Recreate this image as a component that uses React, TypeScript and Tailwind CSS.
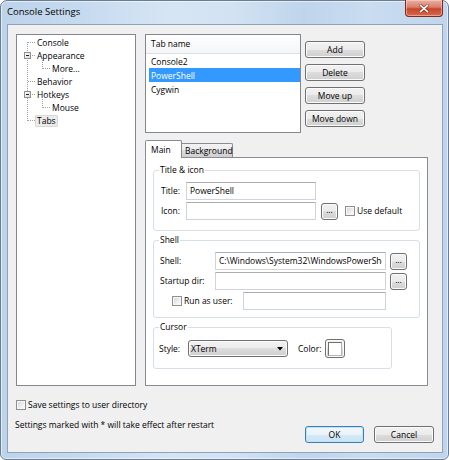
import React from 'react';

const face =
  'rounded-[3px] border border-[#707070] bg-[linear-gradient(180deg,#f2f2f2_0%,#ebebeb_50%,#dddddd_50%,#cfcfcf_100%)] shadow-[inset_0_0_0_1px_#fbfbfb] text-black';
const btn = `flex items-center justify-center ${face}`;

const field =
  'flex h-[18px] items-center border border-[#cfd3da] border-t-[#abadb3] bg-white px-[3px] whitespace-nowrap overflow-hidden';

const CheckBox = () => (
  <span className="block h-[10px] w-[10px] shrink-0 border border-[#8e8f8f] bg-[linear-gradient(135deg,#cfd2d6_0%,#f4f4f4_70%,#ffffff_100%)] shadow-[inset_0_0_0_1px_#f7f7f7]" />
);

const Group = ({ title, className, children }: { title: string; className: string; children: React.ReactNode }) => (
  <fieldset className={`rounded-[3px] border border-[#d5dfe5] ${className}`}>
    <legend className="ml-[5px] px-[1px] leading-[12px]">{title}</legend>
    {children}
  </fieldset>
);

const TreeLines = () => (
  <svg className="pointer-events-none absolute left-0 top-0" width="60" height="100">
    <defs>
      <linearGradient id="bx" x1="0" y1="0" x2="1" y2="1">
        <stop offset="0" stopColor="#ffffff" />
        <stop offset="1" stopColor="#d8d8d8" />
      </linearGradient>
    </defs>
    <g stroke="#a0a0a0" strokeDasharray="1 1" fill="none">
      <line x1="10.5" y1="7" x2="10.5" y2="86" />
      {[7.5, 20.5, 46.5, 59.5, 85.5].map((y) => (
        <line key={y} x1="11" y1={y} x2="18" y2={y} />
      ))}
      <line x1="25.5" y1="25" x2="25.5" y2="34" />
      <line x1="26" y1="33.5" x2="33" y2="33.5" />
      <line x1="25.5" y1="64" x2="25.5" y2="73" />
      <line x1="26" y1="72.5" x2="33" y2="72.5" />
    </g>
    {[20.5, 59.5].map((y) => (
      <g key={y}>
        <rect x="7.5" y={y - 3} width="6" height="6" fill="url(#bx)" stroke="#919191" />
        <line x1="9" y1={y} x2="12" y2={y} stroke="#1f1f1f" />
      </g>
    ))}
  </svg>
);

const treeItems: { label: string; child?: boolean; selected?: boolean }[] = [
  { label: 'Console' },
  { label: 'Appearance' },
  { label: 'More...', child: true },
  { label: 'Behavior' },
  { label: 'Hotkeys' },
  { label: 'Mouse', child: true },
  { label: 'Tabs', selected: true },
];

export default function App() {
  return (
    <div className="h-[460px] w-[449px] font-['Open_Sans','Noto_Sans',sans-serif] text-[8.5px] leading-[12px] text-black">
      <div className="flex h-full flex-col rounded-[6px] rounded-t-[7px] border border-[#6a7d93] bg-[linear-gradient(90deg,#bdd3ea_0%,#c6daef_18%,#d6e5f4_38%,#d2e2f2_52%,#bfd5ec_68%,#c9dcf0_82%,#c0d5ec_100%)] shadow-[inset_0_0_0_1px_rgba(255,255,255,0.55)]">
        {/* Title bar */}
        <div className="flex h-[23px] shrink-0 items-start justify-between">
          <span className="pl-[6px] pt-[5px] text-[9.5px] leading-[12px]">Console Settings</span>
          <div className="-mt-px mr-[5px] flex h-[17px] w-[38px] items-center justify-center rounded-b-[4px] border border-t-0 border-[#7e2a1c] bg-[linear-gradient(180deg,#eab0a3_0%,#db7d68_45%,#c8452c_55%,#d8694a_100%)] shadow-[inset_0_0_0_1px_rgba(255,220,210,0.5)]">
            <svg width="10" height="9" viewBox="0 0 10 9">
              <g strokeLinecap="square">
                <line x1="1.5" y1="1.5" x2="8.5" y2="7.5" stroke="#5a1d12" strokeWidth="3" strokeOpacity="0.6" />
                <line x1="8.5" y1="1.5" x2="1.5" y2="7.5" stroke="#5a1d12" strokeWidth="3" strokeOpacity="0.6" />
                <line x1="1.5" y1="1.5" x2="8.5" y2="7.5" stroke="#ffffff" strokeWidth="1.6" />
                <line x1="8.5" y1="1.5" x2="1.5" y2="7.5" stroke="#ffffff" strokeWidth="1.6" />
              </g>
            </svg>
          </div>
        </div>

        {/* Client area */}
        <div className="mb-[6px] ml-[6px] mr-[5px] flex flex-1 flex-col border border-[#8ea3ba] bg-[#f0f0f0] px-[8px] pt-[9px]">
          <div className="flex">
            {/* Tree */}
            <div className="relative h-[352px] w-[120px] shrink-0 border border-[#828790] bg-white pt-[1px]">
              <TreeLines />
              {treeItems.map((it) => (
                <div key={it.label} className="flex h-[13px] items-center">
                  <span
                    className={`${it.child ? 'ml-[33px]' : 'ml-[18px]'} px-[2px] leading-[12px] ${
                      it.selected ? 'rounded-[2px] bg-[#ebebeb] shadow-[inset_0_0_0_1px_#d9d9d9]' : ''
                    }`}
                  >
                    {it.label}
                  </span>
                </div>
              ))}
            </div>

            {/* Right column */}
            <div className="ml-[9px] flex w-[283px] flex-col">
              <div className="flex h-[99px]">
                <div className="h-full w-[156px] border border-[#828790] bg-white">
                  <div className="flex h-[19px] items-center border-b border-[#dedfe2] bg-[linear-gradient(180deg,#ffffff_0%,#f4f5f7_100%)] pl-[5px]">
                    Tab name
                  </div>
                  <div className="h-[14px] pl-[5px] pt-[2px]">Console2</div>
                  <div className="ml-[3px] h-[14px] bg-[#3399ff] pl-[2px] pt-[2px] text-white">PowerShell</div>
                  <div className="h-[14px] pl-[5px] pt-[2px]">Cygwin</div>
                </div>
                <div className="ml-[4px] flex flex-col gap-[6px] pt-[7px]">
                  {['Add', 'Delete', 'Move up', 'Move down'].map((b) => (
                    <div key={b} className={`${btn} h-[17px] w-[60px]`}>
                      {b}
                    </div>
                  ))}
                </div>
              </div>

              {/* Tabs */}
              <div className="mt-[7px] flex h-[17px] items-end">
                <div className="relative z-10 -mb-px flex h-[18px] w-[37px] items-center rounded-t-[2px] border border-b-0 border-[#898c95] bg-white pl-[5px]">
                  Main
                </div>
                <div className="flex h-[14px] w-[51px] items-center rounded-tr-[2px] border-r border-t border-[#898c95] bg-[linear-gradient(180deg,#f3f3f3_0%,#ebebeb_50%,#dddddd_50%,#cfcfcf_100%)] pl-[3px]">
                  Background
                </div>
              </div>

              <div className="flex h-[229px] flex-col border border-[#898c95] bg-white px-[7px] pt-[6px]">
                <Group title="Title & icon" className="w-[267px]">
                  <div className="pb-[10px] pl-[7px] pt-[6px]">
                    <div className="flex h-[18px] items-center">
                      <span className="w-[25px]">Title:</span>
                      <div className={`${field} w-[130px]`}>PowerShell</div>
                    </div>
                    <div className="mt-[2px] flex h-[18px] items-center">
                      <span className="w-[25px]">Icon:</span>
                      <div className={`${field} w-[130px]`} />
                      <div className={`${btn} ml-[5px] h-[17px] w-[17px] pb-[3px]`}>...</div>
                      <span className="ml-[7px]">
                        <CheckBox />
                      </span>
                      <span className="ml-[2px]">Use default</span>
                    </div>
                  </div>
                </Group>

                <Group title="Shell" className="mt-[3px] w-[267px]">
                  <div className="pb-[7px] pl-[6px] pt-[6px]">
                    <div className="flex h-[18px] items-center">
                      <span className="w-[55px]">Shell:</span>
                      <div className={`${field} w-[171px]`}>
                        <span className="block min-w-0 overflow-hidden whitespace-nowrap">
                          C:\Windows\System32\WindowsPowerShell
                        </span>
                      </div>
                      <div className={`${btn} ml-[4px] h-[17px] w-[17px] pb-[3px]`}>...</div>
                    </div>
                    <div className="mt-[2px] flex h-[18px] items-center">
                      <span className="w-[55px]">Startup dir:</span>
                      <div className={`${field} w-[171px]`} />
                      <div className={`${btn} ml-[4px] h-[17px] w-[17px] pb-[3px]`}>...</div>
                    </div>
                    <div className="mt-[2px] flex h-[18px] items-center">
                      <span className="flex w-[83px] items-center pl-[12px]">
                        <CheckBox />
                        <span className="ml-[2px]">Run as user:</span>
                      </span>
                      <div className={`${field} w-[143px]`} />
                    </div>
                  </div>
                </Group>

                <Group title="Cursor" className="mt-[3px] w-[239px]">
                  <div className="mb-[10px] mt-[6px] flex h-[19px] items-center pl-[5px]">
                    <span className="w-[29px]">Style:</span>
                    <div className={`${face} flex h-[17px] w-[100px] items-center justify-between pl-[2px] pr-[4px]`}>
                      <span>XTerm</span>
                      <svg width="6" height="4" viewBox="0 0 6 4">
                        <path d="M0 0H6L3 3.5Z" fill="#000" />
                      </svg>
                    </div>
                    <span className="ml-[10px] w-[27px]">Color:</span>
                    <div className={`${btn} h-[19px] w-[20px]`}>
                      <span className="block h-[14px] w-[14px] border border-[#6f6f6f] border-b-[#b5b5b5] border-r-[#b5b5b5] bg-white" />
                    </div>
                  </div>
                </Group>
              </div>
            </div>
          </div>

          {/* Bottom */}
          <div className="mt-[13px] flex h-[12px] items-center">
            <CheckBox />
            <span className="ml-[2px]">Save settings to user directory</span>
          </div>
          <div className="mt-[8px] flex items-start justify-between">
            <span className="-ml-px">Settings marked with * will take effect after restart</span>
            <div className="mt-[7px] flex gap-[10px]">
              <div className="flex h-[17px] w-[59px] items-center justify-center rounded-[3px] border border-[#3c7fb1] bg-[linear-gradient(180deg,#f2f8fc_0%,#e8f3fa_50%,#d7eaf7_50%,#cae3f4_100%)] shadow-[inset_0_0_0_1px_#bfe3f8]">
                OK
              </div>
              <div className={`${btn} h-[17px] w-[60px]`}>Cancel</div>
            </div>
          </div>
        </div>
      </div>
    </div>
  );
}
